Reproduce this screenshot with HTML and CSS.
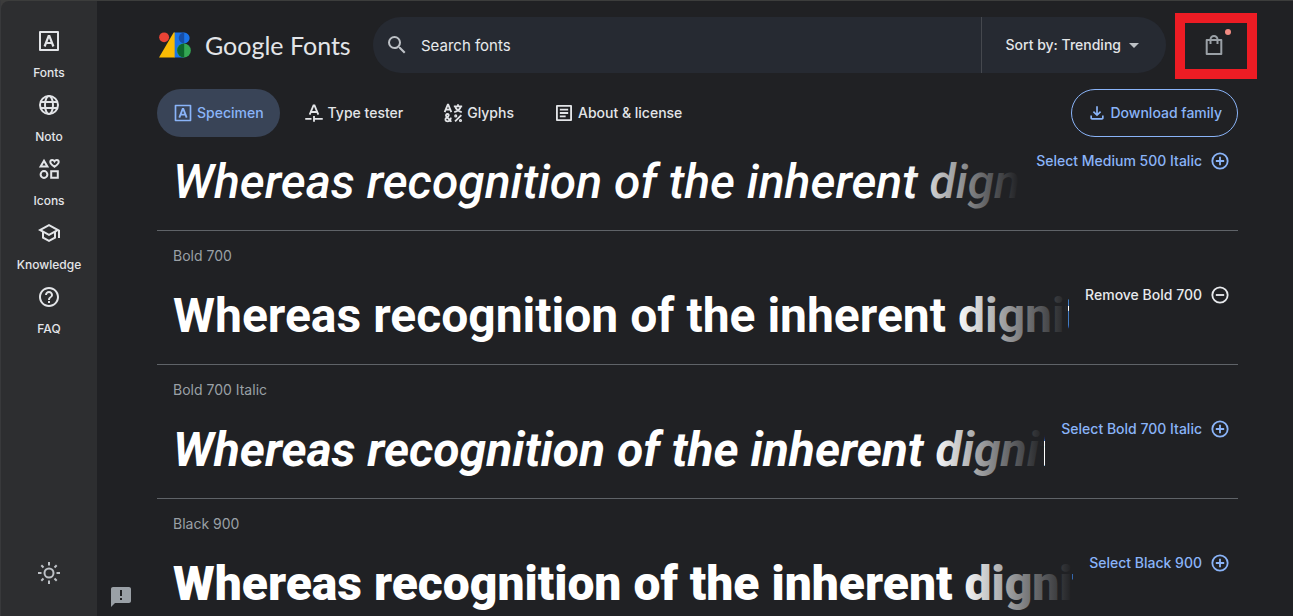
FILE: index.html
```html
<!DOCTYPE html>
<html lang="en">
<head>
<meta charset="utf-8">
<title>Roboto - Google Fonts</title>
<link rel="stylesheet" href="styles.css">
</head>
<body>
<svg class="sprite" aria-hidden="true">
  <symbol id="i-fonts" viewBox="0 0 24 24"><path fill="none" stroke="currentColor" stroke-width="2" stroke-linejoin="round" d="M3 3h18v18H3z"/><path fill="none" stroke="currentColor" stroke-width="2.200" d="M7.600 17.500 11.600 7h.8l4 10.500M9 14h6"/></symbol>
  <symbol id="i-plus" viewBox="0 0 24 24"><circle cx="12" cy="12" r="9.200" fill="none" stroke="currentColor" stroke-width="2.200"/><path fill="none" stroke="currentColor" stroke-width="2.200" d="M12 7v10M7 12h10"/></symbol>
  <symbol id="i-minus" viewBox="0 0 24 24"><circle cx="12" cy="12" r="9.200" fill="none" stroke="currentColor" stroke-width="2.200"/><path fill="none" stroke="currentColor" stroke-width="2.200" d="M7 12h10"/></symbol>
</svg>
<div class="app">
  <nav class="rail" aria-label="Main">
    <a class="rail-item" href="#fonts"><svg class="icon-l"><use href="#i-fonts"/></svg>Fonts</a>
    <a class="rail-item" href="#noto"><svg class="icon-l" viewBox="0 0 24 24"><g fill="none" stroke="currentColor" stroke-width="2"><circle cx="12" cy="12" r="9"/><ellipse cx="12" cy="12" rx="4" ry="9"/><path d="M4 9h16M4 15h16"/></g></svg>Noto</a>
    <a class="rail-item" href="#icons"><svg class="icon-l" viewBox="0 0 24 24"><g fill="none" stroke="currentColor" stroke-width="2"><path d="M3.600 9.500 7 3.800l3.400 5.700z"/><circle cx="7" cy="17.500" r="3.400"/><path d="M14.200 14.200h6.600v6.600h-6.600z"/><path d="M17.500 9.800C15 7.900 13.300 6.500 13.300 4.900c0-1 .8-1.900 1.900-1.900 1 0 1.800.5 2.300 1.300.5-.8 1.300-1.300 2.300-1.300 1.100 0 1.900.9 1.900 1.900 0 1.600-1.700 3-4.200 4.900z"/></g></svg>Icons</a>
    <a class="rail-item" href="#knowledge"><svg class="icon-l" viewBox="0 0 24 24"><path d="M12 3 1 9l4 2.180v6L12 21l7-3.820v-6l2-1.090V17h2V9L12 3zm6.820 6L12 12.720 5.180 9 12 5.280 18.820 9zM17 15.990l-5 2.730-5-2.730v-3.720L12 15l5-2.730v3.720z"/></svg>Knowledge</a>
    <a class="rail-item" href="#faq"><svg class="icon-l" viewBox="0 0 24 24"><path d="M11 18h2v-2h-2v2zm1-16C6.480 2 2 6.480 2 12s4.480 10 10 10 10-4.480 10-10S17.520 2 12 2zm0 18c-4.410 0-8-3.590-8-8s3.590-8 8-8 8 3.590 8 8-3.590 8-8 8zm0-14c-2.210 0-4 1.790-4 4h2c0-1.100.9-2 2-2s2 .9 2 2c0 2-3 1.750-3 5h2c0-2.250 3-2.500 3-5 0-2.210-1.790-4-4-4z"/></svg>FAQ</a>
    <button class="theme" type="button" aria-label="Switch theme"><svg class="icon-l" viewBox="0 0 24 24"><g fill="none" stroke="currentColor" stroke-width="2"><circle cx="12" cy="12" r="4.500"/><path d="M12 1v3.500M12 19.500V23M1 12h3.500M19.500 12H23M4.300 4.300l2.200 2.200M17.500 17.500l2.200 2.200M4.300 19.700l2.200-2.200M17.500 6.500l2.200-2.200"/></g></svg></button>
  </nav>

  <main class="main">
    <header class="header">
      <a class="brand" href="#home">
        <svg class="logo" viewBox="41 67 94 75" aria-hidden="true">
          <path fill="#fbbc04" d="M84 68h4v73H41z"/>
          <circle cx="56" cy="82" r="14.500" fill="#ea4335"/>
          <path fill="#1a73e8" d="M87 68h28a16 16 0 0 1 0 32v41H87z"/>
          <path fill="#174ea6" d="M115 68a16 16 0 0 0 0 32z"/>
          <circle cx="114" cy="120.500" r="20.500" fill="#34a853"/>
          <path fill="#0d652d" d="M115 100a20.500 20.500 0 0 0 0 41z"/>
        </svg>
        <span class="brand-name">Google Fonts</span>
      </a>
      <div class="search">
        <svg class="icon-l" viewBox="0 0 24 24" aria-hidden="true"><path d="M15.500 14h-.79l-.28-.27A6.471 6.471 0 0 0 16 9.500 6.500 6.500 0 1 0 9.500 16c1.610 0 3.090-.59 4.230-1.570l.27.28v.79l5 4.990L20.490 19l-4.990-5zm-6 0C7.010 14 5 11.990 5 9.500S7.010 5 9.500 5 14 7.010 14 9.500 11.990 14 9.500 14z"/></svg>
        <input class="search-input" type="search" placeholder="Search fonts" aria-label="Search fonts">
        <button class="sort" type="button">Sort by: Trending<span class="caret"></span></button>
      </div>
      <button class="bag" type="button" aria-label="View selected families">
        <svg class="icon-l" viewBox="0 0 24 24"><path fill="none" stroke="currentColor" stroke-width="2" stroke-linejoin="round" d="M4.700 7h14.600v14H4.700zM8.500 11V6.500a3.500 3.500 0 0 1 7 0V11"/></svg>
        <span class="bag-dot"></span>
        <span class="highlight"></span>
      </button>
    </header>

    <div class="toolbar">
      <nav class="tabs" aria-label="Family">
        <a class="tab active" href="#specimen"><svg class="icon"><use href="#i-fonts"/></svg>Specimen</a>
        <a class="tab" href="#tester"><svg class="icon" viewBox="0 0 24 24"><g fill="none" stroke="currentColor" stroke-width="2.200"><path d="M6.800 14 11.400 3h1.200l4.600 11M8.400 10.800h7.200M1.500 19H9M12 19h10.500M12 15.500v7"/></g></svg>Type tester</a>
        <a class="tab" href="#glyphs"><svg class="icon" viewBox="0 0 24 24"><g fill="none" stroke="currentColor" stroke-width="2.200"><path d="M2 11 5.700 2h.6L10 11M3.500 8h5M13 4h10M18 1.500V4M14.500 4c1 3.500 4 6 8 7M21.500 4c-1 3.500-4 6-8 7M22 14.500 14.500 22"/><circle cx="15.300" cy="15.500" r=".8"/><circle cx="21" cy="21" r=".8"/><path d="M10 22.500 4 16c-1-1.500 0-2.800 1.300-2.800s2.300 1.500 1 2.700L3.800 18c-1.800 1.500-.8 4 1.400 4C7.500 22 9 20.500 9.500 17.500"/></g></svg>Glyphs</a>
        <a class="tab" href="#about"><svg class="icon" viewBox="0 0 24 24"><path fill="none" stroke="currentColor" stroke-width="2.200" stroke-linejoin="round" d="M3.500 3.500h17v17h-17z"/><path fill="none" stroke="currentColor" stroke-width="2.200" d="M7 8h10M7 12h10M7 16h7"/></svg>About &amp; license</a>
      </nav>
      <button class="download" type="button"><svg class="icon" viewBox="0 0 24 24"><path d="M12 16 7 11l1.400-1.450 2.600 2.600V4h2v8.150l2.600-2.600L17 11zm-6 4q-.83 0-1.410-.59Q4 18.830 4 18v-3h2v3h12v-3h2v3q0 .83-.59 1.410Q18.830 20 18 20z"/></svg>Download family</button>
    </div>

    <section class="styles" aria-label="Styles">
      <article class="row first">
        <div class="sample-col"><p class="sample w500 italic">Whereas recognition of the inherent dignity</p></div>
        <button class="pick" type="button">Select Medium 500 Italic<svg class="icon"><use href="#i-plus"/></svg></button>
      </article>
      <article class="row">
        <div class="sample-col"><h2 class="label">Bold 700</h2><p class="sample w700">Whereas recognition of the inherent dignity</p></div>
        <button class="pick remove" type="button">Remove Bold 700<svg class="icon"><use href="#i-minus"/></svg></button>
      </article>
      <article class="row">
        <div class="sample-col"><h2 class="label">Bold 700 Italic</h2><p class="sample w700 italic">Whereas recognition of the inherent dignity</p></div>
        <button class="pick" type="button">Select Bold 700 Italic<svg class="icon"><use href="#i-plus"/></svg></button>
      </article>
      <article class="row">
        <div class="sample-col"><h2 class="label">Black 900</h2><p class="sample w900">Whereas recognition of the inherent dignity</p></div>
        <button class="pick" type="button">Select Black 900<svg class="icon"><use href="#i-plus"/></svg></button>
      </article>
    </section>
    <button class="feedback" type="button" aria-label="Send feedback"><svg class="icon-l" viewBox="0 0 24 24"><path d="M20 2H4c-1.100 0-2 .9-2 2v18l4-4h14c1.100 0 2-.9 2-2V4c0-1.100-.9-2-2-2zm-7 13h-2v-2h2v2zm0-4h-2V5h2v6z"/></svg></button>
  </main>
</div>
</body>
</html>
```
FILE: styles.css
```css
* { box-sizing: border-box; }

body {
  margin: 0;
  height: 100vh;
  overflow: hidden;
  background: #3c3c3c;
  color: #e3e5e8;
  font: 500 14px/20px Inter, Roboto, sans-serif;
}

button, input {
  font: inherit;
  color: inherit;
  background: none;
  border: 0;
  padding: 0;
}

a { color: inherit; text-decoration: none; }
svg { fill: currentColor; flex: none; }
.sprite { position: absolute; width: 0; height: 0; }
.icon { width: 20px; height: 20px; }
.icon-l { width: 24px; height: 24px; }

.app {
  display: flex;
  height: 100vh;
  border-top: 1px solid #3c3d3c;
  border-left: 1px solid #38393b;
}

.rail {
  display: flex;
  flex-direction: column;
  align-items: center;
  flex: none;
  width: 96px;
  padding: 28px 0 31px;
  background: #2d2e30;
  border-top-left-radius: 8px;
}

.rail-item {
  display: flex;
  flex-direction: column;
  align-items: center;
  gap: 12px;
  height: 64px;
  font-size: 12px;
  line-height: 16px;
}

.theme {
  height: 24px;
  margin-top: auto;
  color: #bdc1c6;
}

.main {
  position: relative;
  display: flex;
  flex-direction: column;
  flex: 1;
  min-width: 0;
  padding: 16px 55px 0 60px;
  background: #202124;
}

.header {
  display: flex;
  align-items: center;
  height: 56px;
  margin-bottom: 16px;
}

.brand {
  display: flex;
  align-items: center;
  gap: 14px;
  width: 216px;
  padding-left: 2px;
}

.logo { width: 32px; height: 26px; }

.brand-name {
  font: 400 25px/32px Lato, sans-serif;
  white-space: nowrap;
}

.search {
  display: flex;
  align-items: center;
  flex: 1;
  height: 56px;
  margin-right: 24px;
  padding-left: 12px;
  border-radius: 28px;
  background: #262a32;
}

.search .icon-l { color: #bdc1c6; }

.search-input {
  flex: 1;
  min-width: 0;
  height: 56px;
  padding-left: 12px;
  font-size: 15px;
  font-weight: 400;
  outline: 0;
}

.search-input::placeholder { color: #e8eaed; opacity: 1; }

.sort {
  display: flex;
  align-items: center;
  gap: 8px;
  height: 56px;
  padding: 0 27px 0 24px;
  border-left: 1px solid #45484e;
}

.caret {
  border: 5px solid transparent;
  border-top-color: #bdc1c6;
  border-bottom: 0;
}

.bag {
  position: relative;
  display: flex;
  align-items: center;
  justify-content: center;
  width: 48px;
  height: 48px;
  color: #9aa0a6;
}

.bag-dot {
  position: absolute;
  top: 8px;
  right: 7px;
  width: 6px;
  height: 6px;
  border-radius: 50%;
  background: #f28b82;
}

.highlight {
  position: absolute;
  inset: -8px -19px -10px -15px;
  border: 10px solid #ed1c24;
}

.toolbar {
  display: flex;
  justify-content: space-between;
  height: 48px;
  margin-bottom: 8px;
}

.tabs { display: flex; gap: 8px; }

.tab, .download {
  display: flex;
  align-items: center;
  gap: 4px;
  height: 48px;
  padding: 0 16px;
  border-radius: 24px;
  white-space: nowrap;
}

.tab.active { background: #394457; color: #8ab4f8; }

.download {
  padding: 0 15px;
  border: 1px solid #8ab4f8;
  color: #8ab4f8;
}

.row {
  display: flex;
  align-items: center;
  gap: 16px;
  padding: 15px 8px 20px 16px;
  border-bottom: 1px solid #5f6368;
}

.row.first { align-items: flex-start; padding-top: 6px; }
.row.first .sample { margin-top: 3px; }

.sample-col { flex: 1; min-width: 0; }

.label {
  margin: 0 0 22px;
  color: #9aa0a6;
  font-size: 14px;
  font-weight: 400;
  line-height: 20px;
}

.sample {
  position: relative;
  margin: 0;
  overflow: hidden;
  color: #fff;
  font: 400 48px/56px Roboto, sans-serif;
  white-space: nowrap;
}

.sample::after {
  content: "";
  position: absolute;
  top: 0;
  right: 1px;
  bottom: 0;
  width: 112px;
  background: linear-gradient(to right, rgba(32, 33, 36, 0), #202124);
}

.w500 { font-weight: 500; }
.w700 { font-weight: 700; }
.w900 { font-weight: 900; }
.italic { font-style: italic; }

.pick {
  display: flex;
  align-items: center;
  gap: 8px;
  flex: none;
  height: 20px;
  color: #8ab4f8;
  white-space: nowrap;
}

.pick.remove { color: #e8eaed; }

.feedback {
  position: absolute;
  left: 12px;
  bottom: 7px;
  height: 24px;
  color: #9aa0a6;
}
```
